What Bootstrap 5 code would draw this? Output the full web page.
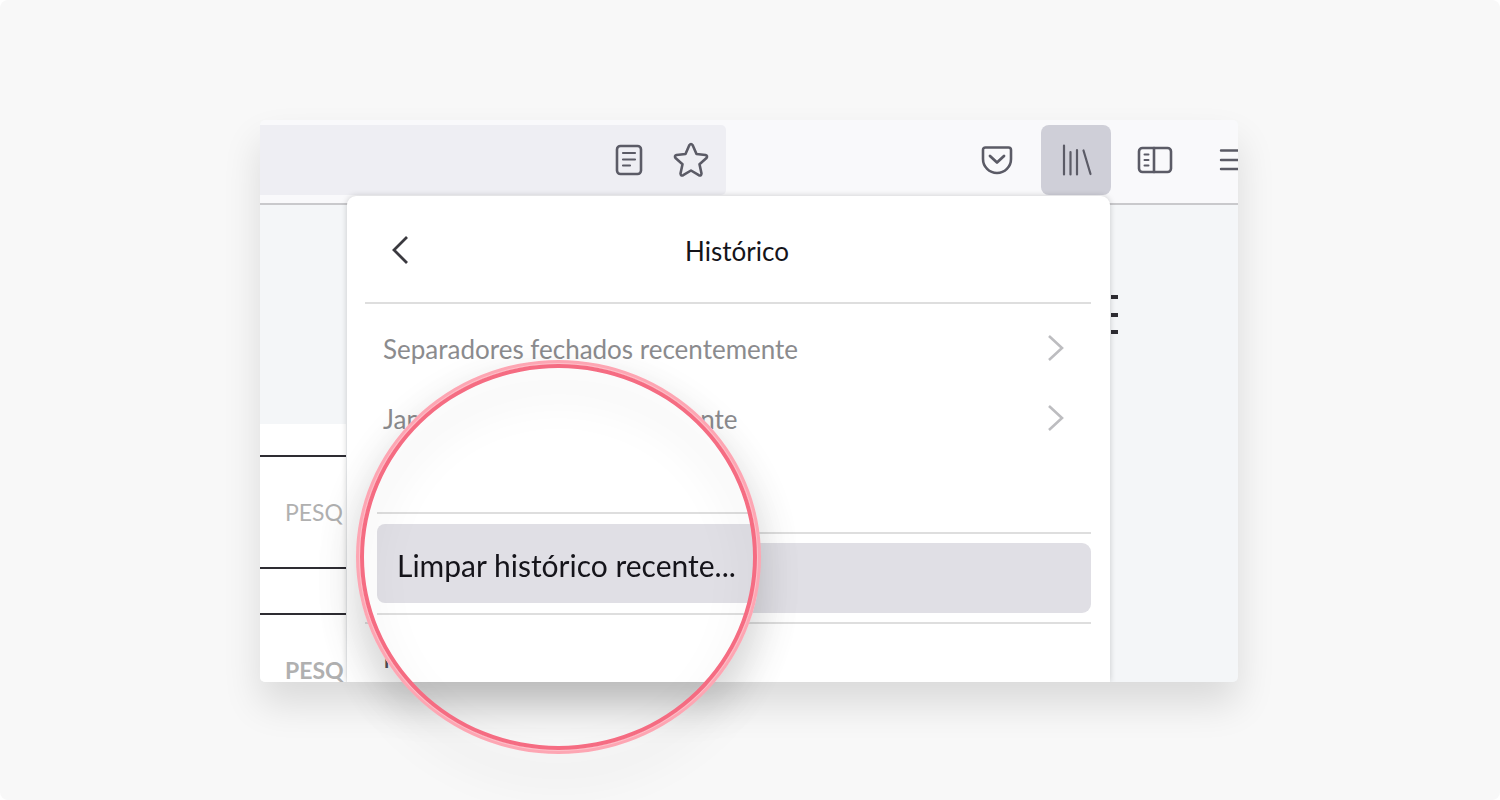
<!DOCTYPE html>
<html lang="pt">
<head>
<meta charset="utf-8">
<meta name="viewport" content="width=device-width, initial-scale=1">
<title>Histórico</title>
<link href="https://cdn.jsdelivr.net/npm/bootstrap@5.3.0/dist/css/bootstrap.min.css" rel="stylesheet">
<style>
  body { background: #fff; font-family: Lato, "Open Sans", sans-serif; font-size: 26px; line-height: 32px; color: #15141a; }
  .page { background: #f8f8f8; border-radius: 8px; padding-top: 120px; }
  .stage { max-width: 980px; padding-right: 2px; }
  .browser { height: 562px; border-radius: 5px; background: #f4f6f8; box-shadow: 0 22px 38px rgba(0,0,0,.12); }
  .toolbar { background: #f9f9fb; padding: 5px 0 8px; border-bottom: 2px solid #c9c9cc; }
  .address { width: 466px; height: 70px; background: #eeeef3; border-radius: 0 5px 5px 0; padding-right: 4px; }
  .address .btn { width: 62px; }
  .tools { gap: 9px; margin-right: -31px; }
  .tools .btn { width: 70px; height: 70px; border-radius: 8px; }
  .tools .btn.active { background: #cfcfd8; color: #5b5b66; }
  .btn { --bs-btn-border-width: 0px; color: #5b5b66; padding: 0; }
  .site { width: 86px; color: #b0b0b0; font-size: 23px; line-height: 22px; }
  .site-top { height: 219px; }
  .site-body { background: #fff; }
  .site-gap { height: 31px; }
  .site-field { border-top: 2px solid #2e2d33; border-bottom: 2px solid #2e2d33; height: 114px; padding-left: 25px; }
  .site-split { height: 44px; }
  .site-more { top: 175px; left: 850px; }
  .history { left: 87px; right: 128px; top: 76px; bottom: 0; background: #fff; border-radius: 9px 9px 0 0; padding: 0 19px 0 18px; box-shadow: 0 0 6px rgba(0,0,0,.18); }
  .history-head { height: 108px; border-bottom: 2px solid #dedede; padding: 4px 0 0 18px; }
  .history-items { padding: 10px 0 78px; border-bottom: 2px solid #dedede; }
  .entry { height: 70px; padding: 0 25px 0 18px; font-size: inherit; line-height: inherit; color: #8b8b8e; border-radius: 9px; }
  .entry-selected { background: #e0dfe5; margin: 9px 0; }
  .entry-next { color: #55555c; border-top: 2px solid #dedede; border-radius: 0; }
  .lens { left: 96px; top: 240px; width: 405px; height: 394px; }
  .lens-glass { filter: drop-shadow(0 20px 20px rgba(0,0,0,.16)); }
  .lens-clip { padding: 4px; border-radius: 50%; overflow: hidden; clip-path: ellipse(50% 50%); }
  .lens-sheet { background: #fff; height: 318px; padding: 148px 0 0 17px; }
  .lens-row { border-top: 2px solid #dedede; border-bottom: 2px solid #dedede; padding: 10px 0; }
  .lens-entry { width: 100%; height: 79px; background: #e0dfe5; border-radius: 8px 0 0 8px; padding: 4px 0 0 20px; color: #15141a; font-size: 30px; text-align: left; }
  .lens-ring { border: 4px solid #fda6b3; border-radius: 50%; filter: drop-shadow(0 22px 20px rgba(0,0,0,.12)); pointer-events: none; }
  .lens-ring-inner { border: 4px solid #f56c82; border-radius: 50%; box-shadow: 0 0 0 1px #fdc0c9; }
</style>
</head>
<body>
<main class="page min-vh-100">
  <div class="stage mx-auto position-relative">
    <div class="browser position-relative overflow-hidden">
      <div class="toolbar d-flex">
        <div class="address d-flex justify-content-end">
          <button class="btn" aria-label="Vista de leitura"><svg width="28" height="32" viewBox="0 0 28 32" fill="none" stroke="currentColor" stroke-width="2.6" stroke-linecap="round"><rect x="2" y="2" width="24" height="28" rx="3.5"/><path d="M8 9h12M8 15.500h12M8 21.500h7" stroke-width="2.200"/></svg></button>
          <button class="btn" aria-label="Adicionar marcador"><svg width="36" height="36" viewBox="0 0 36 36" fill="none" stroke="currentColor" stroke-width="2.600" stroke-linejoin="round"><path d="M16.300 3.200Q18 .8 19.700 3.200L23.500 12L32.500 13Q35 13.800 33.500 16L26.500 22.200L28.500 31.500Q28.300 34.200 25.800 33.200L18 28.500L10.200 33.200Q7.700 34.200 7.500 31.500L9.500 22.200L2.500 16Q1 13.800 3.500 13L12.500 12Z"/></svg></button>
        </div>
        <div class="tools d-flex ms-auto">
          <button class="btn" aria-label="Pocket"><svg width="32" height="30" viewBox="0 0 32 30" fill="none" stroke="currentColor" stroke-width="2.600" stroke-linecap="round" stroke-linejoin="round"><path d="M4.500 2.500h23q2.500 0 2.500 2.500v9a14 14 0 0 1-28 0V5q0-2.500 2.500-2.500z"/><path d="M9 11l7 6.500L23 11" stroke-width="2.800"/></svg></button>
          <button class="btn active" aria-label="Biblioteca"><svg width="32" height="32" viewBox="0 0 32 32" fill="none" stroke="currentColor" stroke-width="2.200" stroke-linecap="round"><path d="M4 1.500v29M10.500 8v22.500M17 6v24.500M23.500 6.500l7 23.500"/></svg></button>
          <button class="btn" aria-label="Barra lateral"><svg width="36" height="28" viewBox="0 0 36 28" fill="none" stroke="currentColor" stroke-width="2.600" stroke-linecap="round"><rect x="2" y="2" width="32" height="24" rx="3.500"/><path d="M17 2v24"/><path d="M7.500 8.500h4M7.500 14h4M7.500 19.500h4" stroke-width="2"/></svg></button>
          <button class="btn" aria-label="Menu"><svg width="30" height="24" viewBox="0 0 30 24" fill="none" stroke="currentColor" stroke-width="2.400" stroke-linecap="round"><path d="M2 1.500h26M2 11h26M2 20h26"/></svg></button>
        </div>
      </div>
      <div class="site">
        <div class="site-top"></div>
        <div class="site-body">
          <div class="site-gap"></div>
          <div class="site-field d-flex align-items-center">PESQ</div>
          <div class="site-split"></div>
          <div class="site-field d-flex align-items-center fw-bold">PESQ</div>
        </div>
      </div>
      <svg class="site-more position-absolute" width="8" height="42" viewBox="0 0 8 42" fill="#2e2d33" aria-hidden="true"><path d="M1 0h7v4H1zM1 18h7v4H1zM1 35h7v4H1z"/></svg>

      <section class="history position-absolute">
        <div class="history-head d-flex align-items-center justify-content-center position-relative">
          <button class="btn position-absolute start-0 ms-4" aria-label="Voltar"><svg width="24" height="30" viewBox="0 0 24 30" fill="none" stroke="#3a393f" stroke-width="2.800"><path d="M18 1L5 14l13 13"/></svg></button>
          <span>Histórico</span>
        </div>
        <div class="history-items">
          <button class="btn entry w-100 d-flex align-items-center justify-content-between">Separadores fechados recentemente <svg width="20" height="28" viewBox="0 0 20 28" fill="none" stroke="#bdbdc0" stroke-width="2.600"><path d="M3 1l13 12L3 25"/></svg></button>
          <button class="btn entry w-100 d-flex align-items-center justify-content-between">Janelas fechadas recentemente <svg width="20" height="28" viewBox="0 0 20 28" fill="none" stroke="#bdbdc0" stroke-width="2.600"><path d="M3 1l13 12L3 25"/></svg></button>
        </div>
        <button class="btn entry entry-selected w-100" aria-label="Limpar histórico recente"></button>
        <div class="entry entry-next d-flex align-items-center">Histórico recente</div>
      </section>
    </div>

    <div class="lens position-absolute">
      <div class="lens-glass h-100">
        <div class="lens-clip h-100">
          <div class="lens-sheet">
            <div class="lens-row"><button class="btn lens-entry">Limpar histórico recente...</button></div>
          </div>
        </div>
      </div>
      <div class="lens-ring position-absolute top-0 start-0 w-100 h-100"><div class="lens-ring-inner h-100"></div></div>
    </div>
  </div>
</main>
<script src="https://cdn.jsdelivr.net/npm/bootstrap@5.3.0/dist/js/bootstrap.bundle.min.js"></script>
</body>
</html>
